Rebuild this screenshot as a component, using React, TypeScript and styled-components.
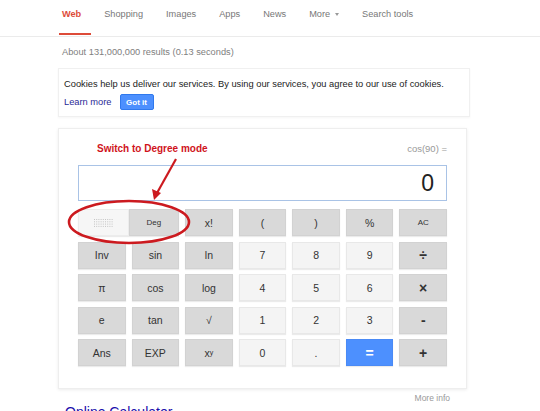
import React from 'react';
import styled, { createGlobalStyle } from 'styled-components';

const GlobalStyle = createGlobalStyle`
  body {
    margin: 0;
    background: #fff;
    font-family: "Liberation Sans", Arial, sans-serif;
  }
`;

type Kind = 'op' | 'num' | 'eq';

const rows: { label: React.ReactNode; kind: Kind; big?: boolean }[][] = [
  [
    { label: 'Inv', kind: 'op' },
    { label: 'sin', kind: 'op' },
    { label: 'ln', kind: 'op' },
    { label: '7', kind: 'num' },
    { label: '8', kind: 'num' },
    { label: '9', kind: 'num' },
    { label: '÷', kind: 'op', big: true },
  ],
  [
    { label: 'π', kind: 'op' },
    { label: 'cos', kind: 'op' },
    { label: 'log', kind: 'op' },
    { label: '4', kind: 'num' },
    { label: '5', kind: 'num' },
    { label: '6', kind: 'num' },
    { label: '×', kind: 'op', big: true },
  ],
  [
    { label: 'e', kind: 'op' },
    { label: 'tan', kind: 'op' },
    { label: '√', kind: 'op' },
    { label: '1', kind: 'num' },
    { label: '2', kind: 'num' },
    { label: '3', kind: 'num' },
    { label: '-', kind: 'op', big: true },
  ],
  [
    { label: 'Ans', kind: 'op' },
    { label: 'EXP', kind: 'op' },
    {
      label: (
        <>
          x<sup>y</sup>
        </>
      ),
      kind: 'op',
    },
    { label: '0', kind: 'num' },
    { label: '.', kind: 'num' },
    { label: '=', kind: 'eq' },
    { label: '+', kind: 'op', big: true },
  ],
];

const tabs = ['Web', 'Shopping', 'Images', 'Apps', 'News', 'More', 'Search tools'];

export default function App() {
  return (
    <Page>
      <GlobalStyle />
      <Header>
        {tabs.map((t) => (
          <Tab key={t} $active={t === 'Web'}>
            {t}
            {t === 'More' && <Caret />}
          </Tab>
        ))}
      </Header>
      <Content>
        <Stats>About 131,000,000 results (0.13 seconds)</Stats>
        <CookieBox>
          <CookieText>
            Cookies help us deliver our services. By using our services, you agree to our use of
            cookies.
          </CookieText>
          <CookieActions>
            <LearnMore href="#">Learn more</LearnMore>
            <GotIt>Got it</GotIt>
          </CookieActions>
        </CookieBox>
        <Card>
          <CardTop>
            <Hint>Switch to Degree mode</Hint>
            <Expr>cos(90) =</Expr>
          </CardTop>
          <Display>0</Display>
          <Keys>
            <ModeKey>
              <RadHalf>
                <svg width="20" height="10" viewBox="0 0 20 10">
                  {Array.from({ length: 4 }).map((_, r) =>
                    Array.from({ length: 9 }).map((_, c) => (
                      <rect
                        key={`${r}-${c}`}
                        x={1 + c * 2.2}
                        y={1 + r * 2.3}
                        width="1"
                        height="1"
                        fill="#c4c4c4"
                      />
                    ))
                  )}
                </svg>
              </RadHalf>
              <DegHalf>Deg</DegHalf>
            </ModeKey>
            <Key $kind="op">x!</Key>
            <Key $kind="op">(</Key>
            <Key $kind="op">)</Key>
            <Key $kind="op">%</Key>
            <Key $kind="op" $small>
              AC
            </Key>
            {rows.flat().map((k, i) => (
              <Key key={i} $kind={k.kind} $big={k.big}>
                {k.label}
              </Key>
            ))}
          </Keys>
          <Annotation width="200" height="120" viewBox="0 0 200 120">
            <ellipse cx="70" cy="93" rx="60" ry="21" fill="none" stroke="#cc1a1f" strokeWidth="2.6" />
            <line x1="117" y1="30" x2="98" y2="64" stroke="#cc1a1f" strokeWidth="2.2" />
            <polygon points="95,71 93,60 102,64" fill="#cc1a1f" />
          </Annotation>
        </Card>
        <MoreInfo>More info</MoreInfo>
        <ResultLink href="#">Online Calculator</ResultLink>
      </Content>
    </Page>
  );
}

const Page = styled.div`
  width: 540px;
  height: 411px;
  overflow: hidden;
  background: #fff;
`;

const Header = styled.nav`
  display: flex;
  align-items: flex-start;
  gap: 23px;
  height: 36px;
  padding-left: 62px;
  border-bottom: 1px solid #ebebeb;
  box-sizing: content-box;
`;

const Tab = styled.div<{ $active?: boolean }>`
  position: relative;
  display: flex;
  align-items: center;
  gap: 5px;
  height: 36px;
  padding-bottom: 8px;
  box-sizing: border-box;
  font-size: 9.2px;
  color: ${(p) => (p.$active ? '#dd4b39' : '#777')};
  font-weight: ${(p) => (p.$active ? 'bold' : 'normal')};

  ${(p) =>
    p.$active &&
    `
    &::after {
      content: '';
      position: absolute;
      left: -3px;
      right: -10px;
      bottom: 1px;
      height: 2px;
      background: #dd4b39;
    }
  `}
`;

const Caret = styled.span`
  width: 0;
  height: 0;
  border-left: 2.5px solid transparent;
  border-right: 2.5px solid transparent;
  border-top: 3px solid #999;
`;

const Content = styled.div`
  padding-left: 58px;
  width: 412px;
  display: flex;
  flex-direction: column;
`;

const Stats = styled.div`
  font-size: 9.25px;
  color: #808080;
  padding: 10px 0 0 4px;
  height: 21px;
`;

const CookieBox = styled.div`
  height: 49px;
  box-sizing: border-box;
  padding: 10px 0 0 5px;
  border: 1px solid #f0f0f0;
  box-shadow: 0 1px 2px rgba(0, 0, 0, 0.04);
  display: flex;
  flex-direction: column;
  gap: 5px;
`;

const CookieText = styled.div`
  font-size: 9.3px;
  color: #222;
  white-space: nowrap;
`;

const CookieActions = styled.div`
  display: flex;
  align-items: center;
  gap: 8px;
`;

const LearnMore = styled.a`
  font-size: 9.3px;
  color: #2a2a96;
  text-decoration: none;
`;

const GotIt = styled.button`
  width: 34px;
  height: 16px;
  padding: 0;
  border: 1px solid #3079ed;
  border-radius: 2px;
  background: #4d90fe;
  color: #fff;
  font-family: inherit;
  font-size: 8px;
  font-weight: bold;
`;

const Card = styled.div`
  position: relative;
  margin-top: 11px;
  width: 409px;
  height: 261px;
  box-sizing: border-box;
  padding: 0 19px;
  border: 1px solid #eeeeee;
  box-shadow: 0 1px 3px rgba(0, 0, 0, 0.08);
  display: flex;
  flex-direction: column;
`;

const CardTop = styled.div`
  display: flex;
  justify-content: space-between;
  align-items: center;
  height: 34px;
  padding-top: 2px;
`;

const Hint = styled.span`
  margin-left: 19px;
  font-size: 10px;
  font-weight: bold;
  color: #d0141c;
`;

const Expr = styled.span`
  font-size: 9.5px;
  color: #999;
`;

const Display = styled.div`
  height: 36px;
  box-sizing: border-box;
  border: 1px solid #a9c3e6;
  padding-right: 12px;
  display: flex;
  align-items: center;
  justify-content: flex-end;
  font-size: 23px;
  color: #222;
`;

const Keys = styled.div`
  margin-top: 8px;
  display: grid;
  grid-template-columns: repeat(7, 1fr);
  grid-auto-rows: 27px;
  column-gap: 6px;
  row-gap: 5.5px;
`;

const keyBg: Record<Kind, string> = {
  op: '#d9d9d9',
  num: '#f4f4f4',
  eq: '#4d90fe',
};

const Key = styled.div<{ $kind: Kind; $small?: boolean; $big?: boolean }>`
  display: flex;
  align-items: center;
  justify-content: center;
  background: ${(p) => keyBg[p.$kind]};
  border: 1px solid ${(p) => (p.$kind === 'num' ? '#e8e8e8' : p.$kind === 'eq' ? '#4a8af5' : '#d2d2d2')};
  box-sizing: border-box;
  box-shadow: 0 1px 1px rgba(0, 0, 0, 0.08);
  color: ${(p) => (p.$kind === 'eq' ? '#fff' : '#333')};
  font-size: ${(p) => (p.$small ? '8px' : p.$kind === 'eq' || p.$big ? '14px' : '10.5px')};
  font-weight: ${(p) => (p.$kind === 'eq' || p.$big ? 'bold' : 'normal')};

  sup {
    font-size: 7px;
    vertical-align: 4px;
  }
`;

const ModeKey = styled.div`
  grid-column: span 2;
  display: grid;
  grid-template-columns: 1fr 1fr;
  box-shadow: 0 1px 1px rgba(0, 0, 0, 0.08);
`;

const RadHalf = styled.div`
  display: flex;
  align-items: center;
  justify-content: center;
  background: #f6f6f6;
  border: 1px solid #ececec;
`;

const DegHalf = styled.div`
  display: flex;
  align-items: center;
  justify-content: center;
  background: #d9d9d9;
  border: 1px solid #d2d2d2;
  font-size: 8px;
  color: #333;
`;

const Annotation = styled.svg`
  position: absolute;
  left: 0;
  top: 0;
  pointer-events: none;
  overflow: visible;
`;

const MoreInfo = styled.div`
  align-self: flex-end;
  margin: 4px 20px 0 0;
  font-size: 8.5px;
  color: #999;
`;

const ResultLink = styled.a`
  margin: 1px 0 0 7px;
  font-size: 14px;
  color: #1a0dab;
  text-decoration: none;
`;
